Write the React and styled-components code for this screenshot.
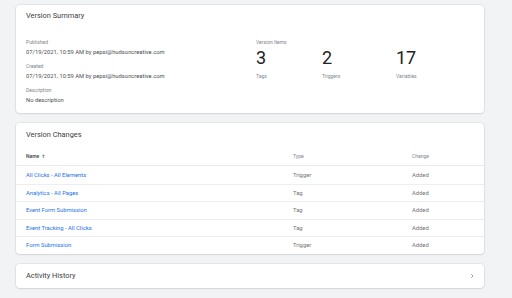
import React from "react";
import styled, { createGlobalStyle } from "styled-components";

const Global = createGlobalStyle`
  html, body { margin: 0; padding: 0; background: #f1f3f4; }
  body { font-family: Roboto, "Noto Sans", Arial, sans-serif; -webkit-font-smoothing: antialiased; }
`;

const Page = styled.div`
  width: 512px;
  height: 298px;
  box-sizing: border-box;
  padding: 5px 28px 0 16px;
  display: flex;
  flex-direction: column;
  gap: 10px;
  background: #f1f3f4;
  overflow: hidden;
`;

const Card = styled.section`
  background: #fff;
  border-radius: 4px;
  box-shadow: 0 0 0 1px rgba(60, 64, 67, 0.07), 0 1px 2px rgba(60, 64, 67, 0.1);
  height: ${(p) => p.$h}px;
  box-sizing: border-box;
  overflow: hidden;
`;

const CardTitle = styled.h2`
  margin: 0;
  padding: 0 10px;
  height: ${(p) => p.$h || 22}px;
  line-height: ${(p) => p.$h || 22}px;
  font-size: 7.4px;
  font-weight: 400;
  color: #3c4043;
`;

const SummaryBody = styled.div`
  display: grid;
  grid-template-columns: 230px 1fr;
  padding: 10px 10px 0;
`;

const FieldList = styled.div`
  display: flex;
  flex-direction: column;
  gap: 4px;
`;

const Label = styled.div`
  font-size: 5px;
  line-height: 10px;
  color: #80868b;
`;

const Value = styled.div`
  font-size: 5.8px;
  line-height: 10px;
  color: #4a4e52;
`;

const Items = styled.div`
  display: flex;
  flex-direction: column;
`;

const Stats = styled.div`
  display: grid;
  grid-template-columns: 66px 74px 1fr;
  margin-top: 2px;
`;

const Stat = styled.div`
  display: flex;
  flex-direction: column;
  gap: 4px;
`;

const Num = styled.div`
  font-size: 18px;
  line-height: 18px;
  color: #202124;
  font-weight: 400;
`;

const Table = styled.div`
  display: flex;
  flex-direction: column;
`;

const Row = styled.div`
  display: grid;
  grid-template-columns: 267px 119px 1fr;
  padding: 0 10px;
  height: ${(p) => (p.$head ? 19 : 17.5)}px;
  align-items: center;
  box-sizing: border-box;
  border-bottom: ${(p) => (p.$head ? "1px solid #e8eaed" : "none")};
  border-top: ${(p) => (p.$first || p.$head ? "none" : "1px solid #eceef0")};
`;

const HeadCell = styled.div`
  font-size: 5px;
  color: ${(p) => (p.$strong ? "#3c4043" : "#80868b")};
  font-weight: ${(p) => (p.$strong ? 500 : 400)};
  display: flex;
  align-items: center;
  gap: 2px;
`;

const LinkCell = styled.a`
  font-size: 5.8px;
  color: #1a73e8;
  text-decoration: none;
`;

const Cell = styled.div`
  font-size: 5.8px;
  color: #6f7377;
`;

const ActivityRow = styled.div`
  display: flex;
  align-items: center;
  justify-content: space-between;
  padding: 0 9px 0 0;
  height: 100%;
`;

const Chevron = styled.svg`
  width: 6px;
  height: 6px;
`;

const changes = [
  ["All Clicks - All Elements", "Trigger"],
  ["Analytics - All Pages", "Tag"],
  ["Event Form Submission", "Tag"],
  ["Event Tracking - All Clicks", "Tag"],
  ["Form Submission", "Trigger"],
];

export default function App() {
  return (
    <>
      <Global />
      <Page>
        <Card $h={108}>
          <CardTitle>Version Summary</CardTitle>
          <SummaryBody>
            <FieldList>
              <div>
                <Label>Published</Label>
                <Value>07/19/2021, 10:59 AM by pepsi@hudsoncreative.com</Value>
              </div>
              <div>
                <Label>Created</Label>
                <Value>07/19/2021, 10:59 AM by pepsi@hudsoncreative.com</Value>
              </div>
              <div>
                <Label>Description</Label>
                <Value>No description</Value>
              </div>
            </FieldList>
            <Items>
              <Label>Version Items</Label>
              <Stats>
                <Stat>
                  <Num>3</Num>
                  <Label>Tags</Label>
                </Stat>
                <Stat>
                  <Num>2</Num>
                  <Label>Triggers</Label>
                </Stat>
                <Stat>
                  <Num>17</Num>
                  <Label>Variables</Label>
                </Stat>
              </Stats>
            </Items>
          </SummaryBody>
        </Card>

        <Card $h={131}>
          <CardTitle $h={24}>Version Changes</CardTitle>
          <Table>
            <Row $head>
              <HeadCell $strong>
                Name
                <svg width="5" height="5" viewBox="0 0 24 24">
                  <path d="M12 20V5M5 11l7-7 7 7" fill="none" stroke="#3c4043" strokeWidth="2.4" />
                </svg>
              </HeadCell>
              <HeadCell>Type</HeadCell>
              <HeadCell>Change</HeadCell>
            </Row>
            {changes.map(([name, type], i) => (
              <Row key={name} $first={i === 0}>
                <LinkCell href="#">{name}</LinkCell>
                <Cell>{type}</Cell>
                <Cell>Added</Cell>
              </Row>
            ))}
          </Table>
        </Card>

        <Card $h={24}>
          <ActivityRow>
            <CardTitle $h={24}>Activity History</CardTitle>
            <Chevron viewBox="0 0 24 24">
              <path d="M9 5l7 7-7 7" fill="none" stroke="#5f6368" strokeWidth="2.5" />
            </Chevron>
          </ActivityRow>
        </Card>
      </Page>
    </>
  );
}
